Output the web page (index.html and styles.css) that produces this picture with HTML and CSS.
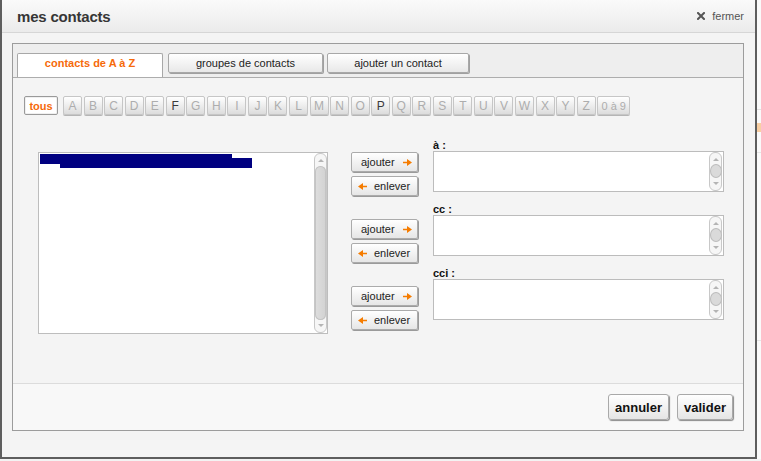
FILE: index.html
```html
<!DOCTYPE html>
<html lang="fr">
<head>
<meta charset="utf-8">
<title>mes contacts</title>
<link rel="stylesheet" href="styles.css">
</head>
<body>
<div class="screen">
  <div class="dialog">
    <div class="dlg-head">
      <h1 class="dlg-title">mes contacts</h1>
      <a class="close"><svg class="close-ico" width="8" height="8" viewBox="0 0 8 8"><path d="M1 1L7 7M7 1L1 7" stroke="#555" stroke-width="2" stroke-linecap="square"/></svg>fermer</a>
    </div>
    <div class="dlg-body">
      <div class="panel">
        <div class="tabs">
          <div class="tab tab-active tab-1">contacts de A à Z</div>
          <div class="tab tab-2">groupes de contacts</div>
          <div class="tab tab-3">ajouter un contact</div>
        </div>
        <div class="content">
          <div class="letters">
            <span class="all">tous</span>
            <div class="alpha">
              <span class="key">A</span><span class="key">B</span><span class="key">C</span><span class="key">D</span><span class="key">E</span><span class="key on">F</span><span class="key">G</span><span class="key">H</span><span class="key">I</span><span class="key">J</span><span class="key">K</span><span class="key">L</span><span class="key">M</span><span class="key">N</span><span class="key">O</span><span class="key on">P</span><span class="key">Q</span><span class="key">R</span><span class="key">S</span><span class="key">T</span><span class="key">U</span><span class="key">V</span><span class="key">W</span><span class="key">X</span><span class="key">Y</span><span class="key">Z</span><span class="key key-num">0 à 9</span>
            </div>
          </div>
          <div class="picker">
            <div class="listbox">
              <div class="list-items"><div class="sel"></div></div>
              <div class="sb sb-long"><span class="sb-up"></span><span class="sb-bar"></span><span class="sb-down"></span></div>
            </div>
            <div class="actions">
              <div class="pair">
                <div class="abtn add">ajouter <svg class="arr" width="9" height="7" viewBox="0 0 9 7"><path d="M0 2.8H5V4.2H0Z M4 0L9 3.5L4 7Z" fill="#f57c00"/></svg></div>
                <div class="abtn rem"><svg class="arr" width="9" height="7" viewBox="0 0 9 7"><path d="M9 2.8H4V4.2H9Z M5 0L0 3.5L5 7Z" fill="#f57c00"/></svg> enlever</div>
              </div>
              <div class="pair">
                <div class="abtn add">ajouter <svg class="arr" width="9" height="7" viewBox="0 0 9 7"><path d="M0 2.8H5V4.2H0Z M4 0L9 3.5L4 7Z" fill="#f57c00"/></svg></div>
                <div class="abtn rem"><svg class="arr" width="9" height="7" viewBox="0 0 9 7"><path d="M9 2.8H4V4.2H9Z M5 0L0 3.5L5 7Z" fill="#f57c00"/></svg> enlever</div>
              </div>
              <div class="pair">
                <div class="abtn add">ajouter <svg class="arr" width="9" height="7" viewBox="0 0 9 7"><path d="M0 2.8H5V4.2H0Z M4 0L9 3.5L4 7Z" fill="#f57c00"/></svg></div>
                <div class="abtn rem"><svg class="arr" width="9" height="7" viewBox="0 0 9 7"><path d="M9 2.8H4V4.2H9Z M5 0L0 3.5L5 7Z" fill="#f57c00"/></svg> enlever</div>
              </div>
            </div>
            <div class="targets">
              <div class="field">
                <div class="flabel">à :</div>
                <div class="farea"><div class="ftext"></div><div class="sb sb-short"><span class="sb-up"></span><span class="sb-knob"></span><span class="sb-down"></span></div></div>
              </div>
              <div class="field">
                <div class="flabel">cc :</div>
                <div class="farea"><div class="ftext"></div><div class="sb sb-short"><span class="sb-up"></span><span class="sb-knob"></span><span class="sb-down"></span></div></div>
              </div>
              <div class="field">
                <div class="flabel">cci :</div>
                <div class="farea"><div class="ftext"></div><div class="sb sb-short"><span class="sb-up"></span><span class="sb-knob"></span><span class="sb-down"></span></div></div>
              </div>
            </div>
          </div>
        </div>
        <div class="footer">
          <button class="bbtn btn-cancel">annuler</button>
          <button class="bbtn btn-ok">valider</button>
        </div>
      </div>
    </div>
  </div>
  <div class="bg-strip"></div>
</div>
</body>
</html>
```
FILE: styles.css
```css
body {
  margin: 0;
  background: #f3f3f3;
  font-family: "Liberation Sans", Arial, sans-serif;
}
.screen {
  display: flex;
  width: 761px;
  height: 461px;
  overflow: hidden;
}
.dialog {
  flex: none;
  width: 757px;
  height: 459px;
  box-sizing: border-box;
  border: 2px solid #5e5e5e;
  border-top: 0;
  background: #f4f4f4;
  display: flex;
  flex-direction: column;
}
.bg-strip {
  flex: 1;
  height: 459px;
  background:
    linear-gradient(to bottom,
      #fafafa 0, #fafafa 109px, #e2e2e2 109px, #e2e2e2 110px,
      #fafafa 110px, #fafafa 123px, #f9cfa3 123px, #f9cfa3 132px,
      #fafafa 132px, #fafafa 152px, #e6e6e6 152px, #e6e6e6 153px,
      #fafafa 153px, #fafafa 340px, #e6e6e6 340px, #e6e6e6 341px,
      #fafafa 341px);
}
.dlg-head {
  flex: none;
  height: 33px;
  box-sizing: border-box;
  border-bottom: 1px solid #d6d6d6;
  background: linear-gradient(#fafafa, #ebebeb);
  display: flex;
  align-items: center;
  justify-content: space-between;
  padding: 0 11px 0 15px;
}
.dlg-title {
  margin: 0;
  font-size: 15px;
  font-weight: bold;
  color: #363636;
  letter-spacing: -0.2px;
}
.close {
  display: flex;
  align-items: center;
  gap: 7px;
  font-size: 11px;
  color: #555;
}
.close-ico { display: block; }
.dlg-body {
  flex: 1;
  padding: 10px 11px 0 10px;
}
.panel {
  height: 388px;
  box-sizing: border-box;
  border: 1px solid #9c9c9c;
  background: #f4f4f4;
  display: flex;
  flex-direction: column;
}
.tabs {
  flex: none;
  height: 34px;
  box-sizing: border-box;
  border-bottom: 1px solid #adadad;
  background: #eeeeee;
  display: flex;
  align-items: flex-start;
  padding: 9px 0 0 4px;
}
.tab {
  height: 20px;
  box-sizing: border-box;
  border: 1px solid #a8a8a8;
  border-radius: 2px;
  background: linear-gradient(#ffffff, #e8e8e8);
  box-shadow: 1px 1px 0 #a0a0a0;
  font-size: 11px;
  color: #222;
  display: flex;
  align-items: center;
  justify-content: center;
}
.tab-active {
  height: 24px;
  border-bottom: 0;
  border-radius: 2px 2px 0 0;
  background: #fff;
  box-shadow: none;
  color: #f66a0a;
  font-weight: bold;
  align-items: flex-start;
  padding-top: 3px;
}
.tab-1 { width: 146px; margin-right: 5px; }
.tab-2 { width: 155px; margin-right: 4px; }
.tab-3 { width: 142px; }
.content {
  flex: 1;
  padding: 18px 0 0 11px;
}
.letters {
  display: flex;
  height: 19px;
}
.all {
  width: 34px;
  height: 19px;
  box-sizing: border-box;
  border: 1px solid #9a9a9a;
  border-radius: 2px;
  background: #fff;
  box-shadow: inset 0 0 0 1px #f0f0f0;
  color: #f66a0a;
  font-weight: bold;
  font-size: 11px;
  display: flex;
  align-items: center;
  justify-content: center;
  margin-right: 5px;
}
.alpha {
  display: flex;
  gap: 1.56px;
}
.key {
  width: 19px;
  height: 19px;
  box-sizing: border-box;
  border: 1px solid #c6c6c6;
  border-radius: 2px;
  background: linear-gradient(#ffffff, #dcdcdc);
  box-shadow: 0 1px 0 #b5b5b5;
  color: #adadad;
  font-size: 12px;
  display: flex;
  align-items: center;
  justify-content: center;
}
.key.on { color: #3a3a3a; }
.key-num {
  width: 33px;
  font-size: 11px;
}
.picker {
  display: flex;
  align-items: flex-start;
  margin-top: 24px;
}
.listbox {
  width: 290px;
  height: 182px;
  box-sizing: border-box;
  margin: 13px 0 0 14px;
  border: 1px solid #bdbdbd;
  background: #fff;
  display: flex;
}
.list-items {
  flex: 1;
  padding: 1px 0 0 1px;
}
.sel {
  width: 192px;
  height: 10px;
  background: #000080;
  box-shadow: 20px 4px 0 #000080;
}
.sb {
  flex: none;
  width: 13px;
  box-sizing: border-box;
  border: 1px solid #c8c8c8;
  border-radius: 6px;
  background: #f6f6f6;
  display: flex;
  flex-direction: column;
  align-items: center;
}
.sb-long { height: 180px; }
.sb-short { height: 39px; margin-right: 1px; }
.sb-up, .sb-down {
  flex: none;
  width: 0;
  height: 0;
  border-left: 3px solid transparent;
  border-right: 3px solid transparent;
}
.sb-up {
  border-bottom: 3px solid #b4b4b4;
  margin: 5px 0 4px;
}
.sb-down {
  border-top: 3px solid #b4b4b4;
  margin: 4px 0 5px;
}
.sb-bar {
  flex: 1;
  width: 11px;
  border-radius: 6px;
  background: linear-gradient(to right, #dedede, #d2d2d2);
  box-shadow: inset 0 0 0 1px #c4c4c4;
}
.sb-knob {
  flex: none;
  width: 12px;
  height: 14px;
  box-sizing: border-box;
  border: 1px solid #bdbdbd;
  border-radius: 50%;
  background: #dadada;
  margin-top: 1px;
}
.sb-short .sb-up { margin: 5px 0 2px; }
.sb-short .sb-down { margin: auto 0 5px; }
.actions {
  width: 67px;
  margin: 13px 0 0 23px;
  display: flex;
  flex-direction: column;
  gap: 23px;
}
.pair {
  display: flex;
  flex-direction: column;
  gap: 4px;
}
.abtn {
  height: 20px;
  box-sizing: border-box;
  border: 1px solid #ababab;
  border-radius: 2px;
  background: linear-gradient(#ffffff, #e6e6e6);
  box-shadow: 1px 1px 0 #9a9a9a;
  font-size: 11px;
  color: #222;
  display: flex;
  align-items: center;
}
.abtn.add {
  justify-content: space-between;
  padding: 0 5px 0 9px;
}
.abtn.rem {
  gap: 7px;
  padding: 0 0 0 6px;
}
.arr { display: block; }
.targets {
  width: 291px;
  margin-left: 15px;
}
.field {
  margin-bottom: 11px;
}
.flabel {
  height: 12px;
  line-height: 12px;
  font-size: 11px;
  font-weight: bold;
  color: #111;
}
.farea {
  height: 41px;
  box-sizing: border-box;
  border: 1px solid #bcbcbc;
  background: #fff;
  display: flex;
  align-items: flex-start;
}
.ftext { flex: 1; }
.footer {
  flex: none;
  height: 47px;
  box-sizing: border-box;
  border-top: 1px solid #dcdcdc;
  background: #f8f8f8;
  display: flex;
  justify-content: flex-end;
  align-items: flex-start;
  gap: 8px;
  padding: 10px 10px 0 0;
}
.bbtn {
  height: 26px;
  box-sizing: border-box;
  margin: 0;
  padding: 0;
  border: 1px solid #a9a9a9;
  border-radius: 3px;
  background: linear-gradient(#ffffff, #e5e5e5);
  box-shadow: 1px 1px 1px #8a8a8a;
  font-family: "Liberation Sans", Arial, sans-serif;
  font-size: 13px;
  font-weight: bold;
  color: #111;
}
.btn-cancel { width: 61px; }
.btn-ok { width: 56px; }
```
